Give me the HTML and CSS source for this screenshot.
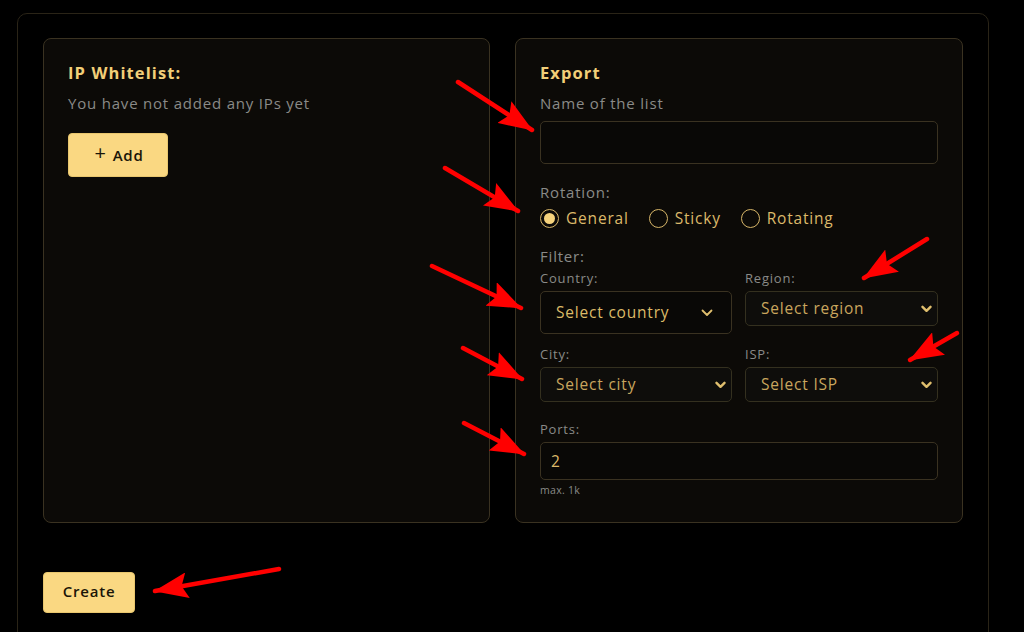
FILE: index.html
```html
<!DOCTYPE html>
<html>
<head>
<meta charset="utf-8">
<link rel="stylesheet" href="styles.css">
</head>
<body>
<div class="frame">
  <div class="cards">
    <section class="card">
      <h2 class="card-title">IP Whitelist:</h2>
      <p class="muted">You have not added any IPs yet</p>
      <button class="btn btn-add"><span class="plus">+</span> Add</button>
    </section>
    <section class="card">
      <h2 class="card-title">Export</h2>
      <label class="label">Name of the list</label>
      <div class="input input-name"></div>
      <div class="label rot-label">Rotation:</div>
      <div class="radios">
        <span class="radio checked"><span class="dot"></span></span><span class="radio-text">General</span>
        <span class="radio"></span><span class="radio-text">Sticky</span>
        <span class="radio"></span><span class="radio-text">Rotating</span>
      </div>
      <div class="label filter-label">Filter:</div>
      <div class="grid">
        <div class="field">
          <div class="small-label">Country:</div>
          <div class="select select-big">Select country
            <svg class="chev-thin" width="12" height="8" viewBox="0 0 12 8"><path d="M1.5 1.5 6 6l4.5-4.5" fill="none" stroke="#e0bf6e" stroke-width="1.8" stroke-linecap="round" stroke-linejoin="round"/></svg>
          </div>
        </div>
        <div class="field">
          <div class="small-label">Region:</div>
          <div class="select">Select region
            <svg class="chev" width="11" height="8" viewBox="0 0 11 8"><path d="M1.5 1.8 5.5 5.8l4-4" fill="none" stroke="#e0bf6e" stroke-width="2.4" stroke-linecap="round" stroke-linejoin="round"/></svg>
          </div>
        </div>
        <div class="field">
          <div class="small-label">City:</div>
          <div class="select">Select city
            <svg class="chev" width="11" height="8" viewBox="0 0 11 8"><path d="M1.5 1.8 5.5 5.8l4-4" fill="none" stroke="#e0bf6e" stroke-width="2.4" stroke-linecap="round" stroke-linejoin="round"/></svg>
          </div>
        </div>
        <div class="field">
          <div class="small-label">ISP:</div>
          <div class="select">Select ISP
            <svg class="chev" width="11" height="8" viewBox="0 0 11 8"><path d="M1.5 1.8 5.5 5.8l4-4" fill="none" stroke="#e0bf6e" stroke-width="2.4" stroke-linecap="round" stroke-linejoin="round"/></svg>
          </div>
        </div>
      </div>
      <div class="small-label ports-label">Ports:</div>
      <div class="input input-ports">2</div>
      <div class="hint">max. 1k</div>
    </section>
  </div>
  <button class="btn btn-create">Create</button>
</div>
<svg class="annotations" width="1024" height="632" viewBox="0 0 1024 632">
  <defs>
    <marker id="head" markerUnits="userSpaceOnUse" markerWidth="34" markerHeight="26" refX="33" refY="13" orient="auto">
      <path d="M0 0 L34 13 L0 26 L6 13 Z" fill="#ff0000"/>
    </marker>
  </defs>
  <g stroke="#ff0000" stroke-width="4.5" stroke-linecap="round" marker-end="url(#head)">
    <line x1="458" y1="82" x2="532" y2="130"/>
    <line x1="445" y1="168" x2="518" y2="211"/>
    <line x1="432" y1="266" x2="521" y2="308"/>
    <line x1="463" y1="348" x2="522" y2="379"/>
    <line x1="464" y1="423" x2="524" y2="454"/>
    <line x1="927" y1="239" x2="864" y2="278"/>
    <line x1="957" y1="333" x2="910" y2="360"/>
    <line x1="279" y1="569" x2="155" y2="591"/>
  </g>
</svg>
</body>
</html>
```

FILE: styles.css
```css
* { box-sizing: border-box; }
html, body { margin: 0; padding: 0; background: #000; }
body {
  position: relative;
  font-family: "Open Sans", "DejaVu Sans", sans-serif;
  letter-spacing: 0.8px;
  width: 1024px;
  height: 632px;
  overflow: hidden;
  padding: 13px 0 0 17px;
}
.annotations {
  position: absolute;
  left: 0;
  top: 0;
  pointer-events: none;
}
.frame {
  width: 972px;
  height: 640px;
  border: 1px solid #2a2417;
  border-radius: 10px;
  padding: 24px 25px 0 25px;
}
.cards {
  display: flex;
  gap: 25px;
}
.card {
  width: 448px;
  height: 485px;
  background: #0c0a07;
  border: 1px solid #3a3221;
  border-radius: 8px;
  padding: 22px 24px;
}
.card-title {
  margin: 0;
  font-size: 16.5px;
  font-weight: 700;
  color: #f2cf78;
  line-height: 24px;
  letter-spacing: 1.1px;
}
.muted {
  margin: 8px 0 0;
  color: #8a8a88;
  font-size: 15px;
  line-height: 20px;
}
.btn {
  background: #fad882;
  border: 1px solid #e8c66e;
  border-radius: 4px;
  color: #1a1508;
  font-family: "Open Sans", sans-serif;
  font-weight: 600;
  font-size: 15px;
  letter-spacing: 0.8px;
  cursor: pointer;
}
.btn-add {
  margin-top: 20px;
  width: 100px;
  height: 44px;
  padding: 0 0 0 2px;
  display: flex;
  align-items: center;
  justify-content: center;
  gap: 6px;
}
.plus { font-size: 20px; font-weight: 500; margin-top: -5px; }
.btn-create {
  margin-top: 49px;
  width: 92px;
  height: 41px;
  padding: 0 0 3px;
}
.label {
  display: block;
  margin-top: 8px;
  color: #8a8a88;
  font-size: 15px;
  line-height: 20px;
}
.input {
  margin-top: 8px;
  width: 398px;
  border: 1px solid #3a3221;
  border-radius: 5px;
  background: #090806;
}
.input-name { height: 43px; }
.rot-label { margin-top: 18px; }
.radios {
  display: flex;
  align-items: center;
  margin-top: 4px;
  height: 24px;
}
.radio {
  width: 19px;
  height: 19px;
  border: 1.6px solid #d6b568;
  border-radius: 50%;
  display: inline-flex;
  align-items: center;
  justify-content: center;
  margin-right: 7px;
}
.radio.checked .dot {
  width: 11px;
  height: 11px;
  border-radius: 50%;
  background: #f5d27c;
}
.radio-text {
  color: #dcb96a;
  font-size: 15.5px;
  margin-right: 20px;
}
.filter-label { margin-top: 16px; }
.grid {
  display: grid;
  grid-template-columns: 192px 193px;
  column-gap: 13px;
  row-gap: 12px;
  margin-top: 4px;
}
.small-label {
  color: #8a8a88;
  font-size: 13px;
  line-height: 16px;
  margin-bottom: 5px;
}
.select {
  position: relative;
  height: 35px;
  border: 1px solid #34301f;
  border-radius: 5px;
  background: #0e0d0b;
  color: #c9a65e;
  font-size: 15.5px;
  line-height: 33px;
  padding-left: 15px;
}
.select-big {
  height: 43px;
  line-height: 41px;
  color: #dcbb68;
  background: #090806;
  border-color: #3a3221;
}
.chev { position: absolute; right: 5px; top: 13px; }
.chev-thin { position: absolute; right: 18px; top: 17px; }
.ports-label { margin-top: 19px; margin-bottom: 0; }
.input-ports {
  margin-top: 5px;
  height: 38px;
  color: #dcb96a;
  font-size: 15.5px;
  line-height: 36px;
  padding-left: 10px;
}
.hint {
  margin-top: 3px;
  color: #8a8a88;
  font-size: 10.5px;
  letter-spacing: 0.3px;
}
```
